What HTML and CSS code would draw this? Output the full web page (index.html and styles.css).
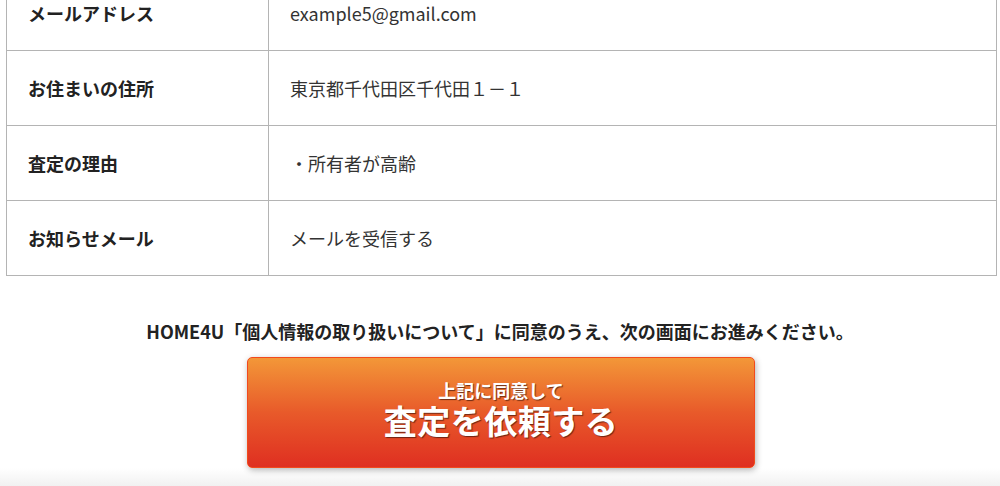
FILE: index.html
```html
<!DOCTYPE html>
<html lang="ja">
<head>
  <meta charset="UTF-8" />
  <meta name="viewport" content="width=device-width, initial-scale=1.0" />
  <title>入力内容の確認</title>
  <link rel="stylesheet" href="styles.css">
</head>
<body>
  <div class="confirm">
    <table class="confirm-table">
      <tr>
        <th>メールアドレス</th>
        <td>example5@gmail.com</td>
      </tr>
      <tr>
        <th>お住まいの住所</th>
        <td>東京都千代田区千代田１－１</td>
      </tr>
      <tr>
        <th>査定の理由</th>
        <td>・所有者が高齢</td>
      </tr>
      <tr>
        <th>お知らせメール</th>
        <td>メールを受信する</td>
      </tr>
    </table>
  </div>

  <div class="submit-area">
    <p class="agree">HOME4U「個人情報の取り扱いについて」に同意のうえ、次の画面にお進みください。</p>
    <button class="submit-btn" type="button">
      <span class="sub">上記に同意して</span>
      <span class="main">査定を依頼する</span>
    </button>
  </div>

  <div class="page-bottom"></div>
</body>
</html>
```

FILE: styles.css
```css
* { box-sizing: border-box; }
body {
  margin: 0;
  font-family: "Noto Sans CJK JP", "Noto Sans", sans-serif;
  color: #222;
  background: #fff;
  overflow: hidden;
}
.confirm {
  margin: -25px 0 0 6px;
  width: 991px;
}
.confirm-table {
  width: 100%;
  border-collapse: collapse;
  font-size: 18px;
}
.confirm-table th,
.confirm-table td {
  height: 75px;
  border: 1px solid #b4b4b4;
  padding: 0 21px;
  text-align: left;
  vertical-align: middle;
}
.confirm-table th {
  width: 262px;
  font-weight: bold;
}
.confirm-table td {
  font-weight: normal;
  color: #333;
}
.submit-area {
  display: flex;
  flex-direction: column;
  align-items: center;
}
.agree {
  margin: 42px 0 13px;
  font-size: 18px;
  line-height: 26px;
  font-weight: bold;
}
.submit-btn {
  width: 508px;
  height: 111px;
  margin-left: 2px;
  border: 1px solid #f24a1c;
  border-radius: 5px;
  background: linear-gradient(#f39738, #e85a2a 50%, #df2f21);
  box-shadow: 1px 2px 6px rgba(0, 0, 0, 0.3);
  color: #fff;
  font-family: inherit;
  font-weight: bold;
  display: flex;
  flex-direction: column;
  align-items: center;
  justify-content: center;
  gap: 3px;
  padding: 0 0 8px;
  cursor: pointer;
  text-shadow: 1px 1px 1px rgba(60, 20, 10, 0.7);
}
.submit-btn span {
  display: block;
}
.submit-btn .sub {
  font-size: 18px;
  line-height: 19px;
}
.submit-btn .main {
  font-size: 33px;
  line-height: 34px;
  letter-spacing: 0.5px;
}
.page-bottom {
  height: 30px;
  background: linear-gradient(#fff, #e8e8e8);
}
```
